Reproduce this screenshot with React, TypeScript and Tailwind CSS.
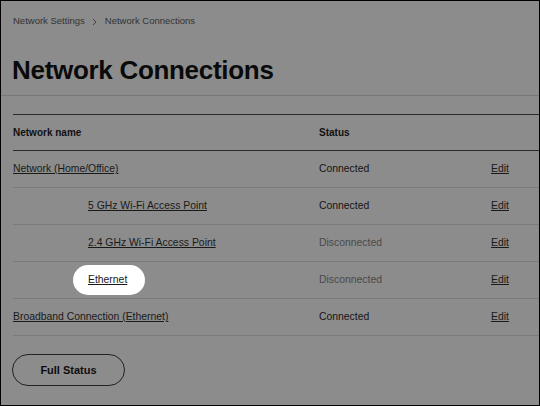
import React from 'react';

type Row = {
  name: string;
  status: 'Connected' | 'Disconnected';
  indent?: boolean;
  highlight?: boolean;
};

const rows: Row[] = [
  { name: 'Network (Home/Office)', status: 'Connected' },
  { name: '5 GHz Wi-Fi Access Point', status: 'Connected', indent: true },
  { name: '2.4 GHz Wi-Fi Access Point', status: 'Disconnected', indent: true },
  { name: 'Ethernet', status: 'Disconnected', indent: true, highlight: true },
  { name: 'Broadband Connection (Ethernet)', status: 'Connected' },
];

export default function App() {
  return (
    <div
      className="w-[540px] h-[406px] overflow-hidden bg-[#8c8c8c] border border-black text-[#111]"
      style={{ fontFamily: '"Liberation Sans", Arial, sans-serif' }}
    >
      <nav className="flex items-center gap-[7px] pl-[12px] pt-[13px] text-[9.5px] text-[#333]">
        <span>Network Settings</span>
        <svg width="6" height="8" viewBox="0 0 6 8" className="mt-[1px]">
          <path d="M1 1l3 3-3 3" fill="none" stroke="#444" strokeWidth="1" />
        </svg>
        <span>Network Connections</span>
      </nav>

      <h1 className="pl-[11px] pt-[27px] text-[26px] leading-[30px] font-bold tracking-[-0.3px] text-[#0a0a0a]">
        Network Connections
      </h1>

      <div className="mt-[10px] border-t border-[#777]" />

      <div className="ml-[12px] mt-[18px] border-t border-[#2a2a2a]">
        <div className="grid grid-cols-[306px_172px_1fr] h-[36px] items-center border-b border-[#2a2a2a] text-[10px] font-bold">
          <span>Network name</span>
          <span>Status</span>
          <span />
        </div>

        {rows.map((r) => (
          <div
            key={r.name}
            className="grid grid-cols-[306px_172px_1fr] h-[37px] items-center border-b border-[#7a7a7a] text-[10.4px]"
          >
            <div className={r.indent ? (r.highlight ? 'pl-[60px]' : 'pl-[75px]') : ''}>
              {r.highlight ? (
                <span className="inline-flex items-center h-[30px] pl-[15px] pr-[18px] bg-white rounded-full">
                  <a className="underline text-[#1a1a1a]">{r.name}</a>
                </span>
              ) : (
                <a className="underline text-[#1a1a1a]">{r.name}</a>
              )}
            </div>
            <span className={r.status === 'Connected' ? 'text-[#141414]' : 'text-[#4a4a4a]'}>{r.status}</span>
            <a className="underline text-[#1a1a1a]">Edit</a>
          </div>
        ))}
      </div>

      <div className="pl-[11px] pt-[18px]">
        <button className="w-[113px] h-[32px] rounded-full border border-[#222] text-[11px] font-bold text-[#0d0d0d]">
          Full Status
        </button>
      </div>
    </div>
  );
}
